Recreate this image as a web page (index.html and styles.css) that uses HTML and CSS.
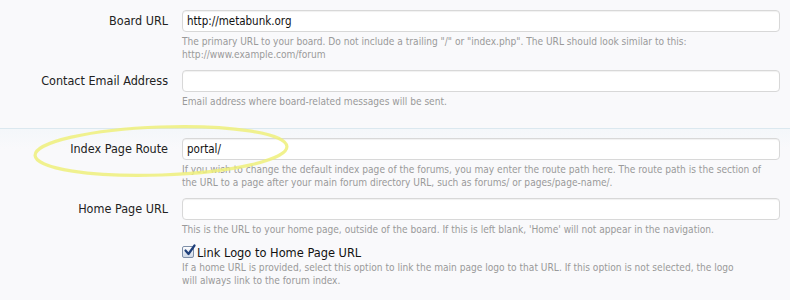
FILE: index.html
```html
<!DOCTYPE html>
<html>
<head>
<meta charset="utf-8">
<link rel="stylesheet" href="styles.css">
</head>
<body>
<div class="page">
  <div class="group">
    <div class="unit">
      <label class="lbl">Board URL</label>
      <div class="ctrl">
        <div class="input">http://metabunk.org</div>
        <p class="explain">The primary URL to your board. Do not include a trailing "/" or "index.php". The URL should look similar to this:<br>http://www.example.com/forum</p>
      </div>
    </div>
    <div class="unit">
      <label class="lbl">Contact Email Address</label>
      <div class="ctrl">
        <div class="input"></div>
        <p class="explain">Email address where board-related messages will be sent.</p>
      </div>
    </div>
  </div>
  <div class="group sep">
    <div class="unit">
      <label class="lbl">Index Page Route</label>
      <div class="ctrl">
        <div class="input">portal/</div>
        <p class="explain">If you wish to change the default index page of the forums, you may enter the route path here. The route path is the section of<br>the URL to a page after your main forum directory URL, such as forums/ or pages/page-name/.</p>
      </div>
    </div>
    <div class="unit">
      <label class="lbl">Home Page URL</label>
      <div class="ctrl">
        <div class="input"></div>
        <p class="explain">This is the URL to your home page, outside of the board. If this is left blank, 'Home' will not appear in the navigation.</p>
      </div>
    </div>
    <div class="unit check">
      <span class="lbl"></span>
      <div class="ctrl">
        <div class="checkrow">
          <span class="box"><svg width="13" height="13" viewBox="0 0 13 13"><path d="M2.5 6.5 L5.5 10 L11.5 1.5" fill="none" stroke="#1f3f7a" stroke-width="2.2" stroke-linecap="round" stroke-linejoin="round"/></svg></span>
          <span class="checklabel">Link Logo to Home Page URL</span>
        </div>
        <p class="explain">If a home URL is provided, select this option to link the main page logo to that URL. If this option is not selected, the logo<br>will always link to the forum index.</p>
      </div>
    </div>
  </div>
  <svg class="circle" width="300" height="70" viewBox="0 0 300 70">
    <ellipse cx="145" cy="34" rx="126" ry="24" transform="rotate(-2 145 34)" fill="none" stroke="#eef07a" stroke-width="3.2" opacity="0.85"/>
  </svg>
</div>
</body>
</html>
```
FILE: styles.css
```css
html, body {
  margin: 0;
  padding: 0;
  background: #f9f9fb;
}
.page {
  position: relative;
  width: 790px;
  height: 300px;
  overflow: hidden;
  font-family: "DejaVu Sans Condensed", "DejaVu Sans", Verdana, sans-serif;
  color: #222;
}
.group {
  padding-top: 10px;
}
.group.sep {
  border-top: 1px solid #dbe8ef;
  margin-top: 20px;
  padding-top: 9px;
  background: linear-gradient(#f4f7fa, #f9f9fb 20px);
}
.unit {
  display: grid;
  grid-template-columns: 168px 1fr;
  column-gap: 14px;
  margin-bottom: 9px;
}
.lbl {
  text-align: right;
  font-size: 12.5px;
  line-height: 22px;
  color: #222;
}
.ctrl {
  padding-right: 4px;
}
.input {
  box-sizing: border-box;
  width: 598px;
  height: 22px;
  border: 1px solid #d8d8d8;
  border-radius: 4px;
  background: #fff;
  box-shadow: inset 0 1px 1px rgba(0,0,0,0.06);
  font-size: 11.5px;
  line-height: 20px;
  padding: 0 4px;
  color: #111;
}
.explain {
  margin: 3px 0 0;
  font-size: 10.1px;
  line-height: 13px;
  color: #9a9a9a;
}
.check .lbl { line-height: 16px; }
.checkrow {
  display: flex;
  align-items: center;
  height: 16px;
  margin-top: -1px;
}
.box {
  box-sizing: border-box;
  width: 12px;
  height: 12px;
  border: 1px solid #7e8fa8;
  border-radius: 2px;
  background: linear-gradient(#fdfdfe, #cfd9e8);
  position: relative;
  margin-right: 3px;
}
.box svg {
  position: absolute;
  left: 0;
  top: -3px;
}
.checklabel {
  font-size: 12.7px;
  color: #111;
}
.check .explain { margin-top: 1px; }
.circle {
  position: absolute;
  left: 16px;
  top: 117px;
}
```
